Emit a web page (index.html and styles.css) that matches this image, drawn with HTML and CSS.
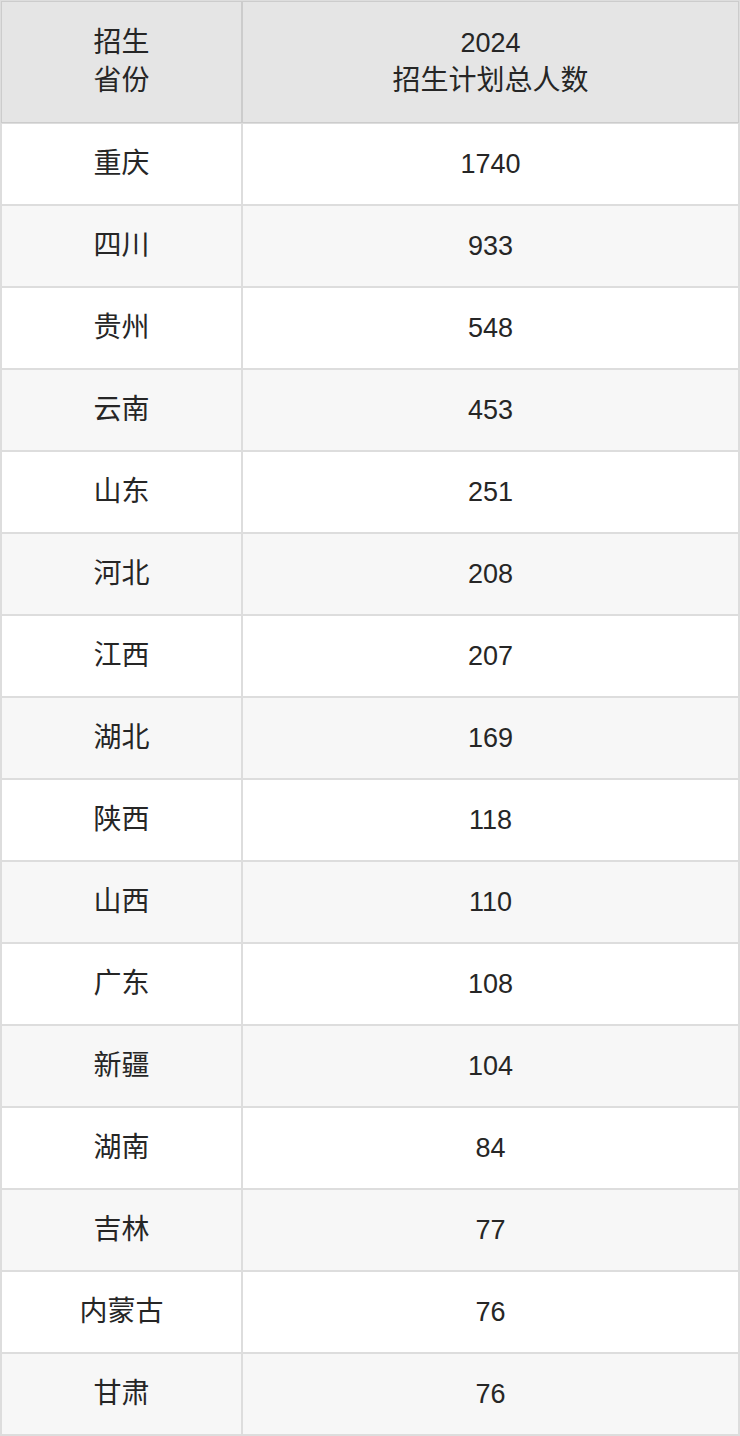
FILE: index.html
```html
<!DOCTYPE html>
<html lang="zh">
<head>
<meta charset="utf-8">
<title>2024招生计划</title>
<link rel="stylesheet" href="styles.css">
</head>
<body>
<table class="plan">
  <thead>
    <tr>
      <th class="col-prov">招生<br>省份</th>
      <th class="col-num"><span class="num">2024</span><br>招生计划总人数</th>
    </tr>
  </thead>
  <tbody>
    <tr><td>重庆</td><td class="num">1740</td></tr>
    <tr><td>四川</td><td class="num">933</td></tr>
    <tr><td>贵州</td><td class="num">548</td></tr>
    <tr><td>云南</td><td class="num">453</td></tr>
    <tr><td>山东</td><td class="num">251</td></tr>
    <tr><td>河北</td><td class="num">208</td></tr>
    <tr><td>江西</td><td class="num">207</td></tr>
    <tr><td>湖北</td><td class="num">169</td></tr>
    <tr><td>陕西</td><td class="num">118</td></tr>
    <tr><td>山西</td><td class="num">110</td></tr>
    <tr><td>广东</td><td class="num">108</td></tr>
    <tr><td>新疆</td><td class="num">104</td></tr>
    <tr><td>湖南</td><td class="num">84</td></tr>
    <tr><td>吉林</td><td class="num">77</td></tr>
    <tr><td>内蒙古</td><td class="num">76</td></tr>
    <tr><td>甘肃</td><td class="num">76</td></tr>
  </tbody>
</table>
</body>
</html>
```

FILE: styles.css
```css
html, body {
  margin: 0;
  padding: 0;
  background: #fff;
}

.plan {
  width: 740px;
  border-collapse: separate;
  border-spacing: 0;
  border: 1px solid #dddddd;
  font-family: "Liberation Sans", "Noto Sans CJK SC", sans-serif;
  font-size: 28px;
  color: #262626;
  table-layout: fixed;
}

.plan th,
.plan td {
  padding: 0;
  text-align: center;
  vertical-align: middle;
  font-weight: normal;
  border: 1px solid #dddddd;
}

.plan thead th {
  background: #e5e5e5;
  border-color: #cccccc;
  height: 120px;
  line-height: 38px;
}

.plan .col-prov {
  width: 239px;
}

.plan tbody td {
  height: 80px;
  line-height: 30px;
}

.plan .num {
  font-size: 27px;
}

.plan tbody tr:nth-child(even) td {
  background: #f7f7f7;
}
```
